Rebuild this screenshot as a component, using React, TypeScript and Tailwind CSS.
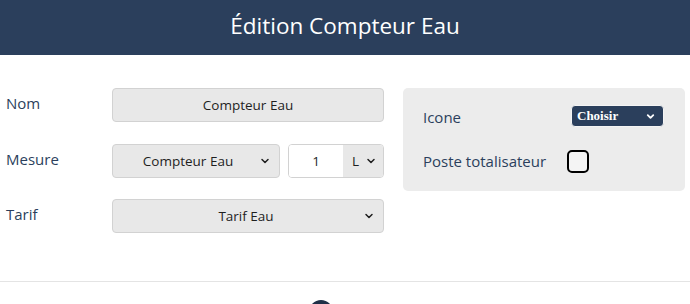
import { ChevronDown } from 'lucide-react'

const font = { fontFamily: '"Open Sans", "Noto Sans", sans-serif' }

function Chevron({ className = '' }: { className?: string }) {
  return <ChevronDown size={12} strokeWidth={3} className={className} />
}

export default function App() {
  return (
    <div className="w-[690px] h-[304px] overflow-hidden bg-white" style={font}>
      {/* Header */}
      <header className="h-[55px] bg-[#2b3f5c] flex items-center justify-center">
        <h1 className="text-[22.5px] text-white pb-[3px]">Édition Compteur Eau</h1>
      </header>

      <div className="flex pt-[33px] pl-[6px]">
        {/* Form fields */}
        <div className="w-[378px]">
          <div className="flex items-center h-[34px]">
            <span className="w-[106px] text-[15px] text-[#2b3f5c] pb-1">Nom</span>
            <div className="w-[272px] h-[34px] rounded-[4px] border border-[#d2d2d2] bg-[#e8e8e8] flex items-center justify-center text-[13.5px] text-[#1f1f1f]">
              Compteur Eau
            </div>
          </div>

          <div className="flex items-center h-[34px] mt-[22px]">
            <span className="w-[106px] text-[15px] text-[#2b3f5c] pb-1">Mesure</span>
            <div className="w-[168px] h-[34px] rounded-[4px] border border-[#d2d2d2] bg-[#e8e8e8] flex items-center text-[13.5px] text-[#1f1f1f]">
              <span className="flex-1 text-center pl-[4px]">Compteur Eau</span>
              <Chevron className="mr-[8px]" />
            </div>
            <div className="ml-[8px] w-[96px] h-[34px] rounded-[4px] border border-[#d2d2d2] flex overflow-hidden text-[13.5px] text-[#1f1f1f]">
              <div className="w-[54px] bg-white flex items-center justify-center">1</div>
              <div className="flex-1 bg-[#e8e8e8] flex items-center justify-between pl-[9px] pr-[6px]">
                <span>L</span>
                <Chevron />
              </div>
            </div>
          </div>

          <div className="flex items-center h-[34px] mt-[21px]">
            <span className="w-[106px] text-[15px] text-[#2b3f5c] pb-1">Tarif</span>
            <div className="w-[272px] h-[34px] rounded-[4px] border border-[#d2d2d2] bg-[#e8e8e8] flex items-center text-[13.5px] text-[#1f1f1f]">
              <span className="flex-1 text-center pl-[16px]">Tarif Eau</span>
              <Chevron className="mr-[8px]" />
            </div>
          </div>
        </div>

        {/* Options panel */}
        <div className="ml-[19px] w-[282px] h-[103px] rounded-[5px] bg-[#ececec] pl-[20px] pt-[17px]">
          <div className="flex items-center h-[22px]">
            <span className="w-[148px] text-[15px] text-[#2b3f5c] pt-[3px]">Icone</span>
            <div className="w-[93px] h-[22px] rounded-[4px] border border-[#f4f4f4] bg-[#2b3f5c] flex items-center justify-between pl-[5px] pr-[7px] text-white">
              <span className="text-[13px] font-bold" style={{ fontFamily: '"Liberation Serif", serif' }}>Choisir</span>
              <ChevronDown size={11} strokeWidth={4} />
            </div>
          </div>
          <div className="flex items-center mt-[23px]">
            <span className="text-[15px] text-[#2b3f5c]">Poste totalisateur</span>
            <div className="ml-[21px] w-[22px] h-[23px] rounded-[5px] border-2 border-black bg-[#f4f4f4]" />
          </div>
        </div>
      </div>

      {/* Footer */}
      <div className="mt-[48px] border-t border-[#e4e4e4] flex justify-center pt-[18px]">
        <div className="w-[24px] h-[24px] rounded-full bg-[#1f2f47] -ml-[48px]" />
      </div>
    </div>
  )
}
